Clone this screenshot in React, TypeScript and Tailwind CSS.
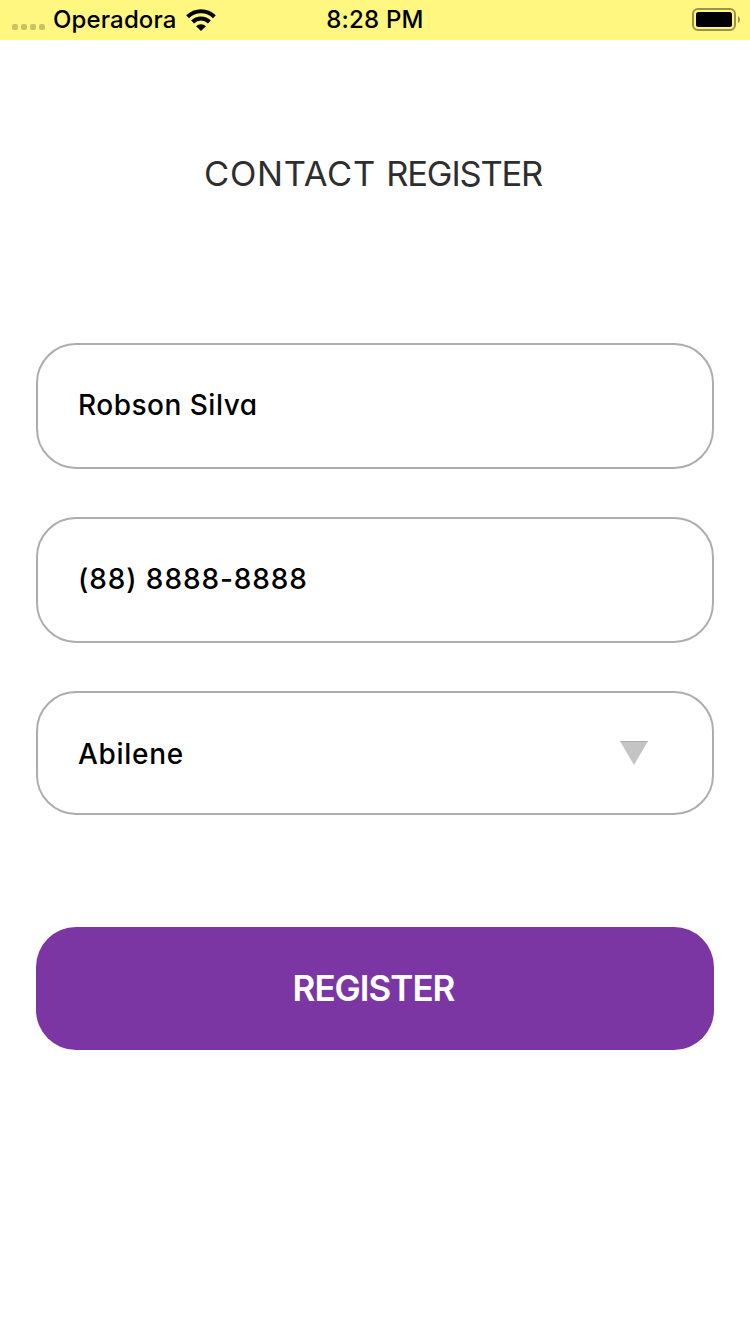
import React from 'react';

function WifiIcon() {
  return (
    <svg width="30" height="22" viewBox="0 0 30 22" className="ml-[10px] shrink-0" fill="none" stroke="#000">
      <path d="M1.6 7.7 A19.2 19.2 0 0 1 28.4 7.7" strokeWidth="4" />
      <path d="M6.6 12.9 A12.1 12.1 0 0 1 23.4 12.9" strokeWidth="4.1" />
      <path d="M15 22 L10.1 17.2 A6.9 6.9 0 0 1 19.9 17.2 Z" fill="#000" stroke="none" />
    </svg>
  );
}

function StatusBar() {
  return (
    <header className="grid h-10 grid-cols-[1fr_auto_1fr] items-center bg-[#fff780] text-[24px] leading-[40px] font-medium text-black">
      <div className="flex items-center pl-3">
        <div className="mt-[14px] flex gap-[3px]">
          {[0, 1, 2, 3].map((dot) => (
            <span key={dot} className="size-[6px] rounded-[2px] bg-[#c8c264]" />
          ))}
        </div>
        <span className="ml-2 w-[123px] tracking-[0.15px] whitespace-nowrap">Operadora</span>
        <WifiIcon />
      </div>
      <span className="tracking-[0.2px]">8:28 PM</span>
      <svg width="50" height="24" viewBox="0 0 50 24" className="mr-[9px] justify-self-end">
        <rect x="2" y="1" width="42" height="21" rx="5" fill="none" stroke="#99944d" strokeWidth="2" />
        <rect x="5" y="4" width="36" height="15" rx="2.5" fill="#000" />
        <path d="M47 8 Q49 9 49 11.5 Q49 14 47 15 Z" fill="#99944d" />
      </svg>
    </header>
  );
}

export default function App() {
  return (
    <div className="flex min-h-[1334px] w-full flex-col bg-white font-['Inter','Liberation_Sans',sans-serif]">
      <StatusBar />
      <main className="flex flex-col px-9 [font-feature-settings:'cv11']">
        <h1 className="mt-[109px] h-[50px] pr-1 text-center text-[34.5px] leading-[50px] font-normal text-[#2e2e2e]">
          <span className="tracking-[0.7px]">CONTACT </span>
          <span className="tracking-[-1.2px]">REGISTER</span>
        </h1>
        <div className="mt-36 flex flex-col gap-12 text-[28px] font-medium text-black">
          <div className="flex h-[126px] items-center rounded-[40px] border-2 border-[#adadad] px-10 pb-[2px]">
            <span className="tracking-[0.5px]">Robson Silva</span>
          </div>
          <div className="flex h-[126px] items-center rounded-[40px] border-2 border-[#adadad] px-10 pb-[2px]">
            <span className="tracking-[0.9px]">(88) 8888-8888</span>
          </div>
          <div className="flex h-[124px] items-center justify-between rounded-[40px] border-2 border-[#adadad] pr-16 pl-10">
            <span className="pt-[2px] tracking-[0.7px]">Abilene</span>
            <svg width="28" height="24" viewBox="0 0 28 24">
              <path d="M0 0H28L14 24Z" fill="#c4c4c4" />
              <path d="M0 0H28L27.5 1H.5Z" fill="#adadad" />
            </svg>
          </div>
        </div>
        <button className="mt-28 h-[123px] rounded-[40px] bg-[#7b36a4] pr-[3px] text-[35px] font-semibold tracking-[-1px] text-white">
          REGISTER
        </button>
      </main>
    </div>
  );
}
